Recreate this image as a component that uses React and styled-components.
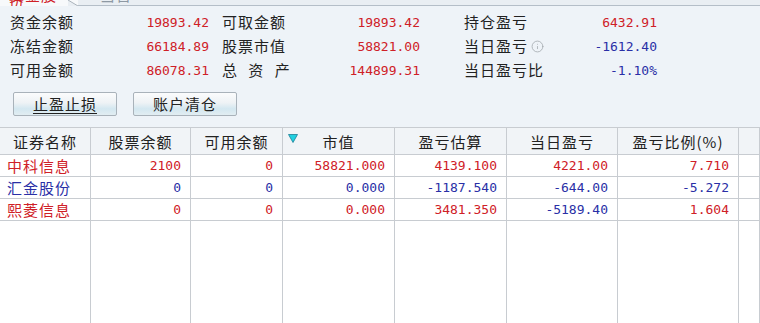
import React from 'react';
import styled, { createGlobalStyle } from 'styled-components';
import { Info } from 'lucide-react';

const RED = '#cf2027';
const BLUE = '#2a2fa6';
const LINE = '#c8ccd1';
const COLS = '91px 100px 92px 112px 112px 111px 121px 1fr';

const summary = [
  [
    { label: '资金余额', value: '19893.42', color: RED },
    { label: '可取金额', value: '19893.42', color: RED },
    { label: '持仓盈亏', value: '6432.91', color: RED },
  ],
  [
    { label: '冻结金额', value: '66184.89', color: RED },
    { label: '股票市值', value: '58821.00', color: RED },
    { label: '当日盈亏', value: '-1612.40', color: BLUE, info: true },
  ],
  [
    { label: '可用金额', value: '86078.31', color: RED },
    { label: '总 资 产', value: '144899.31', color: RED, spread: true },
    { label: '当日盈亏比', value: '-1.10%', color: BLUE },
  ],
];

const headers = ['证券名称', '股票余额', '可用余额', '市值', '盈亏估算', '当日盈亏', '盈亏比例(%)', ''];

const rows = [
  { name: '中科信息', color: RED, cells: ['2100', '0', '58821.000', '4139.100', '4221.00', '7.710'], colors: [RED, RED, RED, RED, RED, RED] },
  { name: '汇金股份', color: BLUE, cells: ['0', '0', '0.000', '-1187.540', '-644.00', '-5.272'], colors: [BLUE, BLUE, BLUE, BLUE, BLUE, BLUE] },
  { name: '熙菱信息', color: RED, cells: ['0', '0', '0.000', '3481.350', '-5189.40', '1.604'], colors: [RED, RED, RED, RED, BLUE, RED] },
];

// label column offsets inside the summary grid
const indents = [0, 13, 44];

const App = () => {
  return (
    <Page>
      <GlobalStyle />

      {/* tab strip, only the bottom edge is visible */}
      <TabStrip>
        <Tab $active $w={68} $pad={9}><TabText>资金股份</TabText></Tab>
        <Slant width="10" height="6" viewBox="0 0 10 6">
          <path d="M0 0 L10 6" stroke="#aab3bc" strokeWidth="1" fill="none" />
        </Slant>
        <Tab $w={60} $pad={22}><TabText>当日</TabText></Tab>
        <TabRest />
      </TabStrip>

      <Summary>
        {summary.map((line, r) => (
          <React.Fragment key={r}>
            {line.map((f, c) => (
              <React.Fragment key={c}>
                <Label $indent={indents[c]} $spread={f.spread}>
                  {f.label}
                  {f.info && <InfoIcon size={15} strokeWidth={1.5} />}
                </Label>
                <Value $color={f.color}>{f.value}</Value>
              </React.Fragment>
            ))}
          </React.Fragment>
        ))}
      </Summary>

      <ButtonRow>
        <Button><u>止盈止损</u></Button>
        <Button>账户清仓</Button>
      </ButtonRow>

      <Table>
        <HeaderRow>
          {headers.map((h, i) => (
            <HeaderCell key={i}>
              {i === 3 && (
                <SortMark width="10" height="9" viewBox="0 0 10 9">
                  <path d="M0.5 0.5 H9.5 L5 8.5 Z" fill="#22d0e0" stroke="#1a7f95" strokeWidth="0.8" />
                </SortMark>
              )}
              {h}
            </HeaderCell>
          ))}
        </HeaderRow>

        {rows.map((row, r) => (
          <DataRow key={r}>
            <NameCell $color={row.color}>{row.name}</NameCell>
            {row.cells.map((v, i) => (
              <NumCell key={i} $color={row.colors[i]}>{v}</NumCell>
            ))}
            <NumCell />
          </DataRow>
        ))}

        <Filler>
          {headers.map((h, i) => <EmptyCell key={i} />)}
        </Filler>
      </Table>
    </Page>
  );
};

export default App;

const GlobalStyle = createGlobalStyle`
  html, body {
    margin: 0;
    padding: 0;
    background: #eef3f8;
    overflow: hidden;
  }
  body {
    font-family: "Noto Sans CJK SC", "Noto Sans", sans-serif;
  }
`;

const Page = styled.div`
  width: 760px;
  height: 323px;
  display: flex;
  flex-direction: column;
  background: #eef3f8;
  color: #222;
`;

const TabStrip = styled.div`
  height: 6px;
  flex-shrink: 0;
  display: flex;
  overflow: hidden;
`;

const Tab = styled.div`
  width: ${p => p.$w}px;
  padding-left: ${p => p.$pad}px;
  box-sizing: border-box;
  overflow: hidden;
  font-size: 15px;
  line-height: 6px;
  letter-spacing: 1px;
  color: ${p => (p.$active ? RED : '#8d98a3')};
  background: ${p => (p.$active ? '#f7f9fb' : '#e9eef3')};
  border-bottom: ${p => (p.$active ? 'none' : '1px solid #b4bec8')};
`;

// pushed up so only the feet of the glyphs show, like a scrolled tab bar
const TabText = styled.span`
  display: block;
  height: 6px;
  margin-top: -8px;
`;

const Slant = styled.svg`
  display: block;
  background: linear-gradient(to top right, #e9eef3 50%, #f7f9fb 50%);
`;

const TabRest = styled.div`
  flex: 1;
  background: #e9eef3;
  border-bottom: 1px solid #b4bec8;
`;

const Summary = styled.div`
  display: grid;
  grid-template-columns: 64px 135px 77px 134px 124px 113px;
  grid-auto-rows: 24px;
  align-items: center;
  padding: 4px 0 0 10px;
`;

const Label = styled.div`
  padding-left: ${p => p.$indent}px;
  font-size: 15px;
  line-height: 24px;
  letter-spacing: 1px;
  white-space: nowrap;
  display: flex;
  align-items: center;
  justify-content: ${p => (p.$spread ? 'space-between' : 'flex-start')};
  width: ${p => (p.$spread ? '62px' : 'auto')};
  word-spacing: ${p => (p.$spread ? '6px' : '0')};
`;

const InfoIcon = styled(Info)`
  color: #a4a9ae;
  margin-left: 3px;
`;

const Value = styled.div`
  font-family: "DejaVu Sans Mono", "Liberation Mono", monospace;
  font-size: 13px;
  text-align: right;
  color: ${p => p.$color};
`;

const ButtonRow = styled.div`
  display: flex;
  gap: 16px;
  padding-left: 13px;
  margin-top: 10px;
`;

const Button = styled.button`
  width: 104px;
  height: 24px;
  padding: 0;
  border: 1px solid #a9b2ba;
  border-radius: 2px;
  background: linear-gradient(#fbfcfd 0%, #eef2f5 45%, #d3e7f0 72%, #e2edf2 100%);
  font-family: "Noto Sans CJK SC", sans-serif;
  font-size: 15px;
  letter-spacing: 1px;
  color: #222;
  line-height: 20px;

  u {
    text-underline-offset: 3px;
  }
`;

const Table = styled.div`
  flex: 1;
  margin-top: 11px;
  display: flex;
  flex-direction: column;
  background: #fff;
  border-top: 1px solid ${LINE};
`;

const HeaderRow = styled.div`
  display: grid;
  grid-template-columns: ${COLS};
  height: 27px;
  box-sizing: border-box;
  background: #f1f4f7;
  border-bottom: 1px solid ${LINE};
`;

const HeaderCell = styled.div`
  position: relative;
  display: flex;
  align-items: center;
  justify-content: center;
  border-right: 1px solid ${LINE};
  font-size: 15px;
  letter-spacing: 1px;
  white-space: nowrap;
`;

const SortMark = styled.svg`
  position: absolute;
  left: 5px;
  top: 6px;
`;

const DataRow = styled.div`
  display: grid;
  grid-template-columns: ${COLS};
  height: 22px;
  box-sizing: border-box;
  border-bottom: 1px solid ${LINE};
`;

const NumCell = styled.div`
  border-right: 1px solid ${LINE};
  padding-right: 9px;
  text-align: right;
  font-family: "DejaVu Sans Mono", "Liberation Mono", monospace;
  font-size: 13px;
  line-height: 21px;
  color: ${p => p.$color || '#222'};
`;

const NameCell = styled.div`
  border-right: 1px solid ${LINE};
  padding-left: 7px;
  font-size: 15px;
  letter-spacing: 1px;
  line-height: 21px;
  color: ${p => p.$color};
`;

const Filler = styled.div`
  flex: 1;
  display: grid;
  grid-template-columns: ${COLS};
`;

const EmptyCell = styled.div`
  border-right: 1px solid ${LINE};
`;
